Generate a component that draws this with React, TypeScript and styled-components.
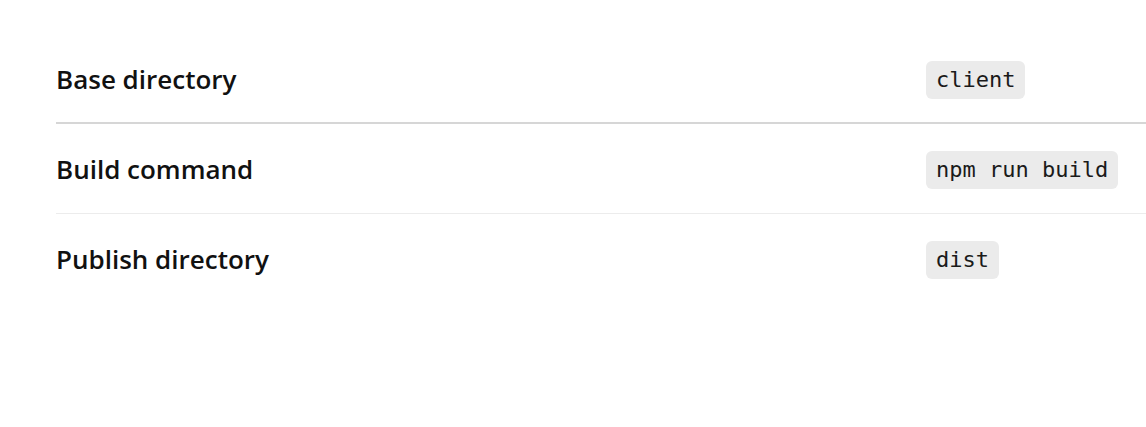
import React from 'react'
import styled, { createGlobalStyle } from 'styled-components'

const GlobalStyle = createGlobalStyle`
  html, body {
    margin: 0;
    padding: 0;
    background: #ffffff;
  }
  body {
    font-family: 'Open Sans', 'Noto Sans', sans-serif;
    color: #1a1a1a;
  }
`

const Page = styled.div`
  padding: 34px 0 0 56px;
  overflow: hidden;
`

const Settings = styled.dl`
  margin: 0;
  display: flex;
  flex-direction: column;
`

const Row = styled.div<{ $strong?: boolean; $last?: boolean }>`
  box-sizing: border-box;
  height: 90px;
  display: grid;
  grid-template-columns: 870px 1fr;
  align-items: start;
  padding-top: 27px;
  border-bottom: ${({ $strong, $last }) =>
    $last ? 'none' : $strong ? '2px solid #d6d6d6' : '1px solid #ececec'};
`

const Label = styled.dt`
  margin: 0;
  font-size: 26px;
  font-weight: 600;
  color: #111;
  line-height: 36px;
`

const Value = styled.dd`
  margin: 0;
  display: flex;
`

const Code = styled.code`
  font-family: 'DejaVu Sans Mono', 'Liberation Mono', monospace;
  font-size: 22px;
  line-height: 38px;
  height: 38px;
  padding: 0 10px;
  background: #ebebeb;
  border-radius: 6px;
  color: #1a1a1a;
`

const rows = [
  { label: 'Base directory', value: 'client', strong: true },
  { label: 'Build command', value: 'npm run build' },
  { label: 'Publish directory', value: 'dist' },
]

export default function App() {
  return (
    <>
      <GlobalStyle />
      <Page>
        <Settings>
          {rows.map((r, i) => (
            <Row key={r.label} $strong={r.strong} $last={i === rows.length - 1}>
              <Label>{r.label}</Label>
              <Value>
                <Code>{r.value}</Code>
              </Value>
            </Row>
          ))}
        </Settings>
      </Page>
    </>
  )
}
